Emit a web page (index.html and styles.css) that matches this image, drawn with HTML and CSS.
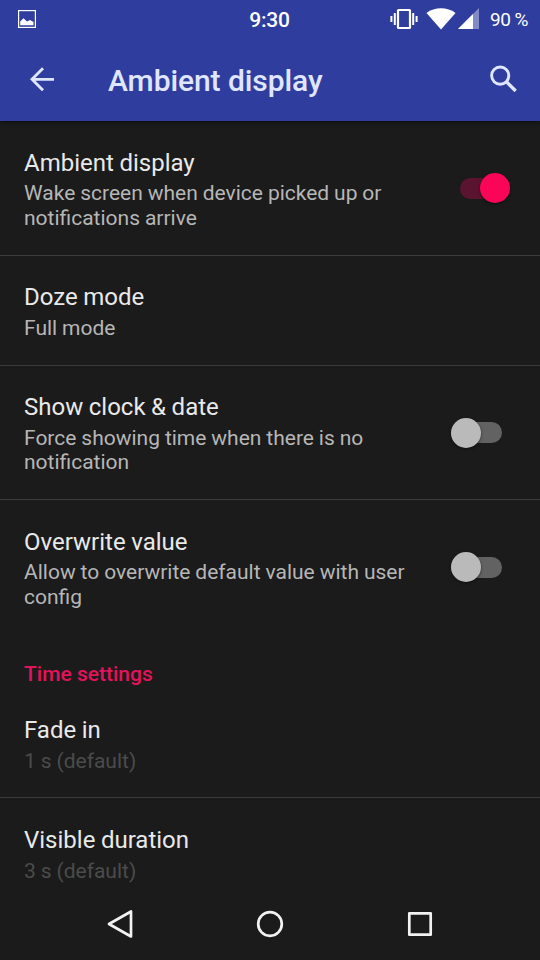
FILE: index.html
```html
<!DOCTYPE html>
<html lang="en">
<head>
    <meta charset="UTF-8">
    <meta name="viewport" content="width=device-width, initial-scale=1.0">
    <title>Ambient display</title>
    <link rel="stylesheet" href="styles.css">
</head>
<body>
    <div class="screen">
        <header class="header">
            <!-- status bar -->
            <div class="status-bar">
                <div class="status-left">
                    <svg width="18" height="18" viewBox="0 0 18 18">
                        <rect x="0.6" y="0.6" width="16.8" height="16.8" fill="none" stroke="#fff" stroke-width="1.2"/>
                        <path d="M2.2 15.3V11.5L5.5 8.3L9 11.5L12 10L15.5 12V15.3Z" fill="#fff"/>
                    </svg>
                </div>
                <div class="status-time">9:30</div>
                <div class="status-right">
                    <svg class="vibrate" width="28" height="22" viewBox="0 0 28 22">
                        <rect x="8" y="2" width="12" height="18" rx="0.6" fill="none" stroke="#fff" stroke-width="2.2"/>
                        <path d="M4.8 5v12M1.4 8v6M23.2 5v12M26.6 8v6" stroke="#fff" stroke-width="2"/>
                    </svg>
                    <svg class="wifi" width="30" height="22" viewBox="0 0 30 22">
                        <path d="M0.5 5C8.5-1.2 21.5-1.2 29.5 5L15 21.5Z" fill="#fff"/>
                    </svg>
                    <svg class="signal" width="21" height="21" viewBox="0 0 21 21">
                        <path d="M0 21L21 0V21Z" fill="#fff" fill-opacity="0.4"/>
                        <path d="M0 21L15 6V21Z" fill="#fff"/>
                    </svg>
                    <span class="battery">90 %</span>
                </div>
            </div>

            <div class="toolbar">
                <svg class="back" width="24" height="24" viewBox="0 0 24 24">
                    <path d="M24 12.3H2M13 1.2L2 12.3L13 23.3" fill="none" stroke="#e0e6ff" stroke-width="2.8"/>
                </svg>
                <h1 class="toolbar-title">Ambient display</h1>
                <svg class="search" width="28" height="28" viewBox="0 0 28 28">
                    <circle cx="10.2" cy="10.6" r="8.6" fill="none" stroke="#e0e6ff" stroke-width="2.9"/>
                    <path d="M16.5 16.9L25.7 26" stroke="#e0e6ff" stroke-width="3.4"/>
                </svg>
            </div>
        </header>

        <main class="list">
            <div class="item">
                <div class="item-text">
                    <div class="item-title">Ambient display</div>
                    <div class="item-summary">Wake screen when device picked up or<br>notifications arrive</div>
                </div>
                <div class="switch on"></div>
            </div>
            <div class="item">
                <div class="item-text">
                    <div class="item-title">Doze mode</div>
                    <div class="item-summary">Full mode</div>
                </div>
            </div>
            <div class="item">
                <div class="item-text">
                    <div class="item-title">Show clock &amp; date</div>
                    <div class="item-summary">Force showing time when there is no<br>notification</div>
                </div>
                <div class="switch"></div>
            </div>
            <div class="item last">
                <div class="item-text">
                    <div class="item-title">Overwrite value</div>
                    <div class="item-summary">Allow to overwrite default value with user<br>config</div>
                </div>
                <div class="switch"></div>
            </div>

            <h2 class="category">Time settings</h2>

            <div class="item">
                <div class="item-text">
                    <div class="item-title">Fade in</div>
                    <div class="item-summary disabled">1 s (default)</div>
                </div>
            </div>
            <div class="item last">
                <div class="item-text">
                    <div class="item-title">Visible duration</div>
                    <div class="item-summary disabled">3 s (default)</div>
                </div>
            </div>
        </main>

        <!-- navigation bar -->
        <nav class="nav-bar">
            <svg width="30" height="30" viewBox="0 0 30 30">
                <path d="M26 2.5V27.5L4 15Z"/>
            </svg>
            <svg width="30" height="30" viewBox="0 0 30 30">
                <circle cx="15" cy="15" r="11.8"/>
            </svg>
            <svg width="30" height="30" viewBox="0 0 30 30">
                <rect x="4.3" y="4.3" width="21.4" height="21.4"/>
            </svg>
        </nav>
    </div>
</body>
</html>
```

FILE: styles.css
```css
* {
    box-sizing: border-box;
}

body {
    margin: 0;
    background-color: #1b1b1b;
    color: #e9e9e9;
    font-family: Roboto, 'Noto Sans', sans-serif;
}

svg {
    display: block;
    flex: none;
}

.screen {
    display: flex;
    flex-direction: column;
    width: 540px;
    height: 960px;
    overflow: hidden;
}

/* header */
.header {
    flex: none;
    height: 121px;
    background-color: #2f3e9e;
    box-shadow: 0 1px 4px rgba(0, 0, 0, 0.6);
}

.status-bar {
    display: grid;
    grid-template-columns: 1fr auto 1fr;
    align-items: center;
    height: 37px;
    padding: 0 12px 0 18px;
    color: #fff;
}

.status-time {
    padding-top: 2px;
    font-size: 21px;
    font-weight: 500;
    margin-right: 7px;
    letter-spacing: -0.2px;
}

.status-right {
    display: flex;
    align-items: center;
    justify-content: flex-end;
}

.wifi {
    margin-left: 8px;
}

.signal {
    margin-left: 2px;
}

.battery {
    margin-left: 11px;
    padding-top: 2px;
    font-size: 19px;
    letter-spacing: -0.5px;
    white-space: nowrap;
}

.toolbar {
    display: flex;
    align-items: center;
    height: 84px;
    padding: 0 22px 0 30px;
}

.toolbar-title {
    flex: 1;
    margin: 2px 0 0 54px;
    color: #e0e6ff;
    font-size: 30px;
    font-weight: 500;
    letter-spacing: -0.07px;
}

/* settings list */
.list {
    flex: 1;
    min-height: 0;
}

.item {
    display: flex;
    align-items: center;
    justify-content: space-between;
    padding: 27.6px 37px 24.4px 24px;
    border-bottom: 1px solid #3c3c3c;
}

.item.last {
    border-bottom-color: transparent;
}

.item-title {
    font-size: 24px;
    line-height: 28px;
    word-spacing: -0.4px;
}

.item-summary {
    margin-top: 4.6px;
    color: #b6b6b6;
    font-size: 21px;
    line-height: 24.5px;
    word-spacing: -0.3px;
}

.item-summary.disabled {
    color: #4b4b4b;
}

.category {
    height: 53.5px;
    margin: 0;
    padding: 27px 24px 0;
    color: #e3135b;
    font-size: 21px;
    font-weight: 500;
    line-height: 25px;
}

/* switch */
.switch {
    display: flex;
    align-items: center;
    flex: none;
    width: 51px;
    height: 21px;
    margin: 0 1px 2.6px 0;
    border-radius: 11px;
    background: linear-gradient(#626262, #626262) no-repeat 100% 0;
}

.switch::before {
    content: "";
    width: 30px;
    height: 30px;
    border-radius: 50%;
    background-color: #bababa;
    box-shadow: 0 1px 3px rgba(0, 0, 0, 0.5);
}

.switch.on {
    justify-content: flex-end;
    width: 50px;
    margin-right: -7px;
    background: #5b1430;
}

.switch.on::before {
    background-color: #fb0558;
}

/* navigation bar */
.nav-bar {
    display: flex;
    flex: none;
    align-items: center;
    justify-content: center;
    gap: 120px;
    height: 72px;
    background-color: #1b1b1b;
}

.nav-bar svg {
    fill: none;
    stroke: #f2f2f2;
    stroke-width: 2.7;
    stroke-linejoin: round;
}
```
